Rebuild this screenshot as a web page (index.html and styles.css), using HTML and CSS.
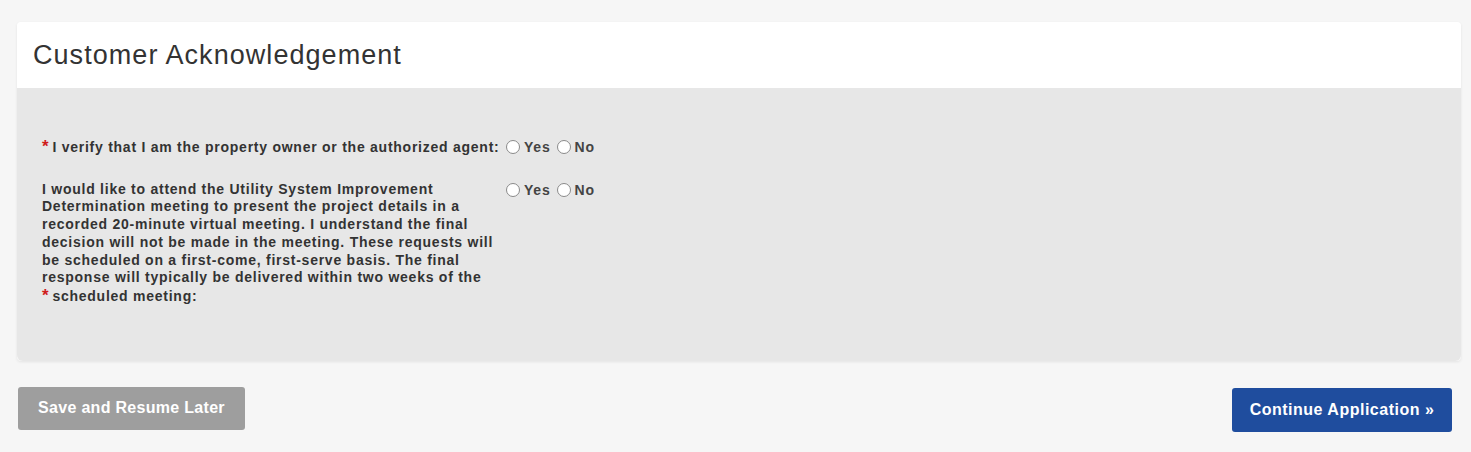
FILE: index.html
```html
<!DOCTYPE html>
<html lang="en">
  <head>
    <meta charset="UTF-8" />
    <meta name="viewport" content="width=device-width, initial-scale=1.0" />
    <title>Customer Acknowledgement</title>
    <link rel="stylesheet" href="styles.css">
  </head>
  <body>
    <main class="pagina">
      <section class="tarjeta">
        <header class="tarjeta-cabecera">
          <h2>Customer Acknowledgement</h2>
        </header>
        <div class="tarjeta-cuerpo">
          <!-- Cada pregunta: etiqueta a la izquierda y radios a la derecha -->
          <div class="fila">
            <label class="etiqueta"><span class="req">*</span>I verify that I am the property owner or the authorized agent:</label>
            <div class="opciones">
              <label><input type="radio" name="owner"> Yes</label>
              <label><input type="radio" name="owner"> No</label>
            </div>
          </div>
          <div class="fila">
            <label class="etiqueta">I would like to attend the Utility System Improvement Determination meeting to present the project details in a recorded 20-minute virtual meeting. I understand the final decision will not be made in the meeting. These requests will be scheduled on a first-come, first-serve basis. The final response will typically be delivered within two weeks of the <span class="req">*</span>scheduled meeting:</label>
            <div class="opciones">
              <label><input type="radio" name="meeting"> Yes</label>
              <label><input type="radio" name="meeting"> No</label>
            </div>
          </div>
        </div>
      </section>
      <div class="acciones">
        <button class="btn btn-gris">Save and Resume Later</button>
        <button class="btn btn-azul">Continue Application &raquo;</button>
      </div>
    </main>
  </body>
</html>
```

FILE: styles.css
```css
body {
  margin: 0;
  background-color: #f6f6f6;
  font-family: "Liberation Sans", Arial, sans-serif;
  color: #333;
}
.pagina {
  padding: 22px 10px 20px 17px;
}
.tarjeta {
  border-radius: 4px;
  box-shadow: 0 1px 3px rgba(0, 0, 0, 0.08);
}
.tarjeta-cabecera {
  background-color: #fff;
  height: 66px;
  display: flex;
  align-items: center;
  padding: 0 16px;
  border-radius: 4px 4px 0 0;
}
.tarjeta-cabecera h2 {
  margin: 0;
  font-weight: normal;
  font-size: 27px;
  letter-spacing: 1.05px;
  color: #333;
}
.tarjeta-cuerpo {
  background-color: #e7e7e7;
  padding: 50px 25px 55px;
  border-radius: 0 0 6px 6px;
  display: flex;
  flex-direction: column;
  gap: 24px;
}
.fila {
  display: flex;
  align-items: flex-start;
  gap: 4px;
}
/* Texto algo más ancho que el Arial normal, como en la captura */
.etiqueta {
  width: 460px;
  font-size: 14px;
  font-weight: bold;
  line-height: 17.7px;
  letter-spacing: 0.75px;
  color: #333;
}
.req {
  color: #d01c1c;
  font-size: 17px;
  margin-right: 3px;
}
.opciones {
  display: flex;
  gap: 6px;
  font-size: 14px;
  font-weight: bold;
  letter-spacing: 0.8px;
  color: #444;
  padding-top: 1px;
}
.opciones label {
  display: flex;
  align-items: center;
  gap: 4px;
}
/* Radio dibujado a mano para parecerse a la captura */
.opciones input {
  appearance: none;
  margin: 0;
  width: 14px;
  height: 14px;
  border: 1px solid #8a8a8a;
  border-radius: 50%;
  background-color: #fff;
}
.acciones {
  display: flex;
  justify-content: space-between;
  align-items: flex-start;
  margin-top: 26px;
  padding: 0 9px 0 1px;
}
.btn {
  border: none;
  border-radius: 3px;
  color: #fff;
  font-family: "Liberation Sans", Arial, sans-serif;
  font-weight: bold;
  font-size: 16px;
  letter-spacing: 0.3px;
  height: 43px;
  padding: 0 10px;
}
.btn-gris {
  background-color: #9e9e9e;
  width: 227px;
}
.btn-azul {
  background-color: #1f4d9e;
  width: 220px;
  height: 44px;
  margin-top: 1px;
  letter-spacing: 0.5px;
}
```
